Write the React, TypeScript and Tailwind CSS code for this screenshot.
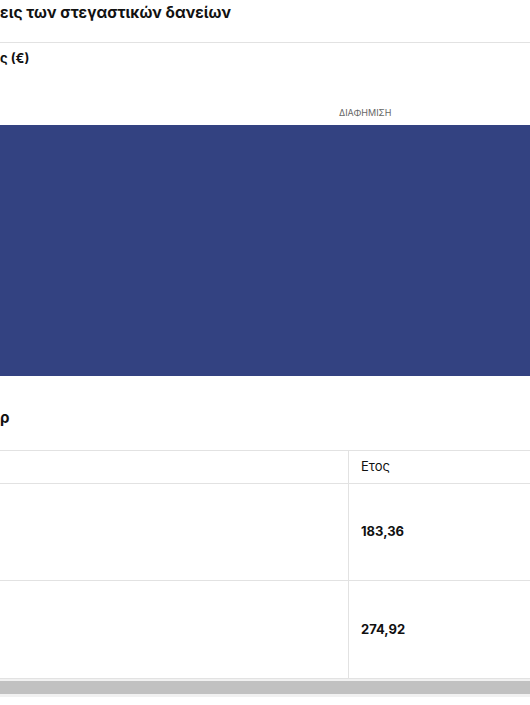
import React from "react";

export default function App() {
  return (
    <div
      className="w-[530px] h-[705px] overflow-hidden bg-white text-[#111]"
      style={{ fontFamily: "Inter, 'Open Sans', 'Liberation Sans', sans-serif" }}
    >
      <div className="h-[43px] border-b border-[#e2e2e2] pt-[2px]">
        <div className="text-[15.5px] leading-[22px] font-bold whitespace-nowrap">
          εις των στεγαστικών δανείων
        </div>
      </div>
      <div className="pt-[6px] text-[13px] leading-[18px] font-bold whitespace-nowrap">
        ς (€)
      </div>
      <div className="mt-[40px] pl-[339px] text-[9px] leading-[12px] text-[#666]">
        ΔΙΑΦΗΜΙΣΗ
      </div>
      <div className="mt-[6px] h-[251px] bg-[#334281]" />
      <div className="mt-[32px] text-[15px] leading-[20px] font-bold">ρ</div>
      <div className="mt-[22px] border-t border-[#e2e2e2] grid grid-cols-[349px_1fr]">
        <div className="h-[33px] border-r border-b border-[#e2e2e2]" />
        <div className="h-[33px] border-b border-[#e2e2e2] pl-[12px] flex items-center text-[13px]">
          Ετος
        </div>
        <div className="h-[97px] border-r border-b border-[#e2e2e2]" />
        <div className="h-[97px] border-b border-[#e2e2e2] pl-[12px] flex items-center text-[13px] font-bold">
          183,36
        </div>
        <div className="h-[98px] border-r border-b border-[#e2e2e2]" />
        <div className="h-[98px] border-b border-[#e2e2e2] pl-[12px] flex items-center text-[13px] font-bold">
          274,92
        </div>
      </div>
      <div className="h-[18px] bg-[#f1f1f1] pt-[2px]">
        <div className="h-[13px] bg-[#c1c1c1]" />
      </div>
    </div>
  );
}
